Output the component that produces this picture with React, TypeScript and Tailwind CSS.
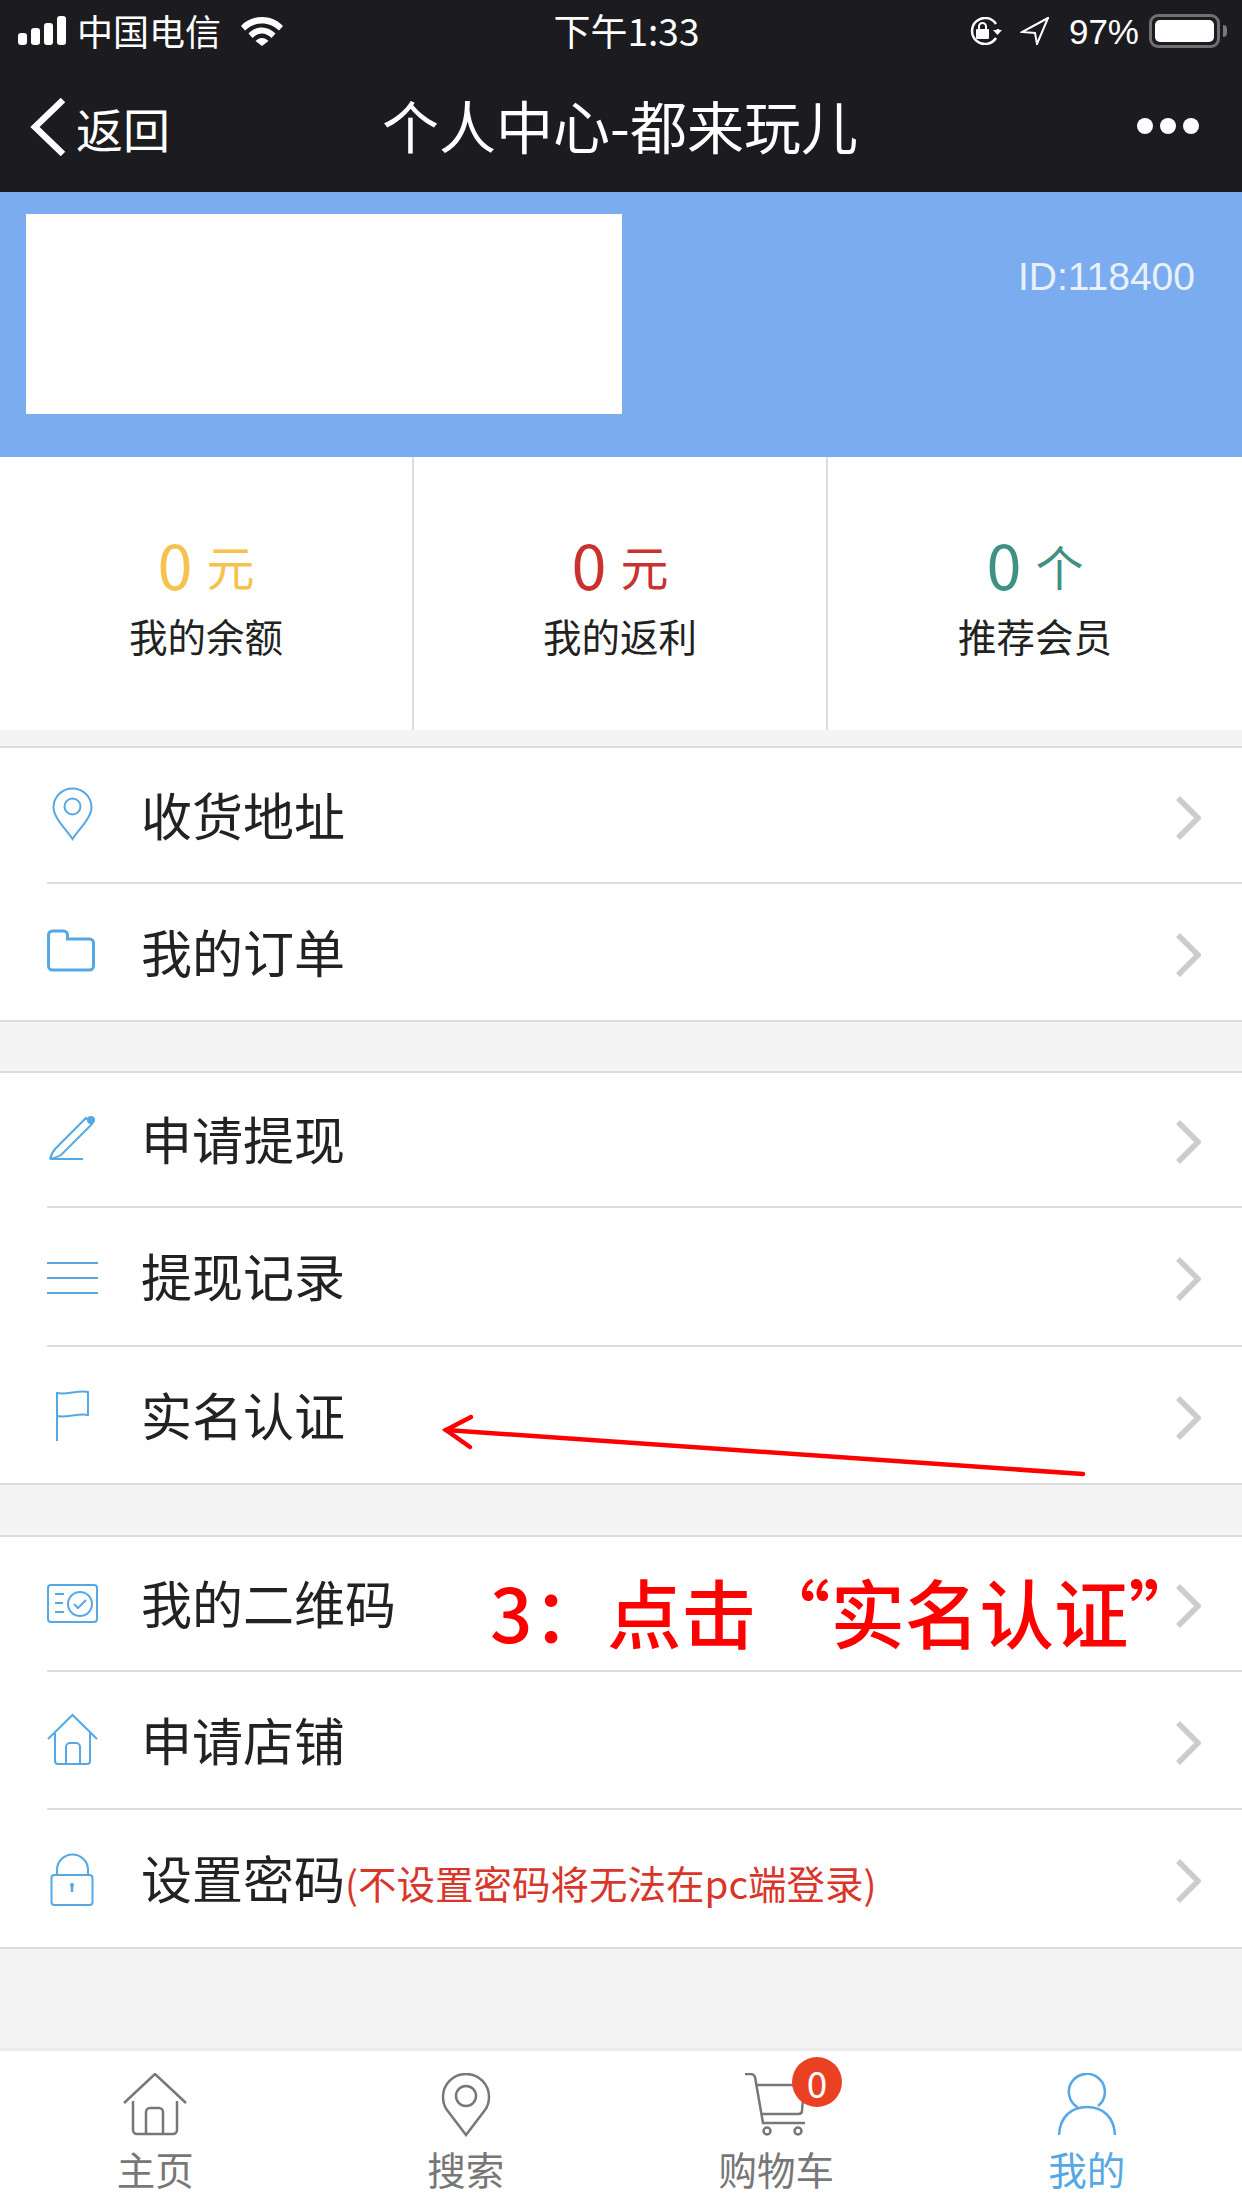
const sans = "font-['Noto_Sans_CJK_SC','Liberation_Sans',sans-serif]";

const PinIcon = () => (
  <svg width="52" height="60" viewBox="0 0 52 60" fill="none" stroke="#56a8e5" strokeWidth="2">
    <path d="M25.500 54C20 45 6.500 33 6.500 22.500a19 19 0 0 1 38 0C44.500 33 31 45 25.500 54Z" />
    <circle cx="25.500" cy="21.500" r="8" />
  </svg>
);

const FolderIcon = () => (
  <svg width="52" height="60" viewBox="0 0 52 60" fill="none" stroke="#56a8e5" strokeWidth="3">
    <path d="M1.500 13a4 4 0 0 1 4-4h11a4 4 0 0 1 4 4v4h22a4 4 0 0 1 4 4v23a4 4 0 0 1-4 4h-37a4 4 0 0 1-4-4Z" />
  </svg>
);

const PencilIcon = () => (
  <svg width="52" height="60" viewBox="0 0 52 60" fill="none" stroke="#56a8e5" strokeWidth="2">
    <path d="M3 49c1-4 3-8 6-11L39 8l6 6-31 31c-3 2-7 3-11 4h33" />
    <circle cx="44" cy="10" r="4" fill="#56a8e5" stroke="none" />
  </svg>
);

const LinesIcon = () => (
  <svg width="52" height="60" viewBox="0 0 52 60" fill="none" stroke="#56a8e5" strokeWidth="2">
    <path d="M0 16h51M0 31h51M0 46h51" />
  </svg>
);

const FlagIcon = () => (
  <svg width="52" height="60" viewBox="0 0 52 60" fill="none" stroke="#56a8e5" strokeWidth="2">
    <path d="M10 56V8c10 2 21-3 31-1v23c-10-2-21 3-31 1" />
  </svg>
);

const CardIcon = () => (
  <svg width="52" height="60" viewBox="0 0 52 60" fill="none" stroke="#56a8e5" strokeWidth="2">
    <rect x="1" y="11" width="49" height="37" rx="3" />
    <circle cx="33" cy="30" r="12" />
    <path d="M27 30l4 4 8-8M8 20h9M8 29h8M8 38h9" />
  </svg>
);

const HouseIcon = () => (
  <svg width="52" height="60" viewBox="0 0 52 60" fill="none" stroke="#56a8e5" strokeWidth="2">
    <path d="M1 29 25.500 5 50 29M8 23v28a3 3 0 0 0 3 3h29a3 3 0 0 0 3-3V23M19 54V37a4 4 0 0 1 4-4h6a4 4 0 0 1 4 4v17" />
  </svg>
);

const LockIcon = () => (
  <svg width="52" height="60" viewBox="0 0 52 60" fill="none" stroke="#56a8e5" strokeWidth="2">
    <rect x="4.500" y="26" width="41" height="30" rx="3" />
    <path d="M10 26V21a15.500 15.500 0 0 1 31 0v5" />
    <path d="M25 36v7" strokeWidth="2.500" />
    <circle cx="25" cy="36" r="2" fill="#56a8e5" stroke="none" />
  </svg>
);

const Chevron = () => (
  <svg className="mt-[5px]" width="28" height="46" viewBox="0 0 28 46" fill="none" stroke="#cccccc" strokeWidth="5.500">
    <path d="M5 3l20 20L5 43" />
  </svg>
);

const groups = [
  {
    className: "mt-0",
    rows: [
      { label: "收货地址", icon: <PinIcon />, height: "h-[136px]" },
      { label: "我的订单", icon: <FolderIcon />, height: "h-[136px]" },
    ],
  },
  {
    className: "mt-[49px]",
    rows: [
      { label: "申请提现", icon: <PencilIcon />, height: "h-[135px]" },
      { label: "提现记录", icon: <LinesIcon />, height: "h-[139px]" },
      { label: "实名认证", icon: <FlagIcon />, height: "h-[136px]" },
    ],
  },
  {
    className: "mt-[50px]",
    rows: [
      { label: "我的二维码", icon: <CardIcon />, height: "h-[135px]" },
      { label: "申请店铺", icon: <HouseIcon />, height: "h-[138px]" },
      {
        label: "设置密码",
        icon: <LockIcon />,
        height: "h-[137px]",
        note: "(不设置密码将无法在pc端登录)",
      },
    ],
  },
];

const stats = [
  { value: "0", unit: "元", label: "我的余额", color: "text-[#f5c24f]", border: "border-r-2" },
  { value: "0", unit: "元", label: "我的返利", color: "text-[#c9322e]", border: "border-r-2" },
  { value: "0", unit: "个", label: "推荐会员", color: "text-[#3f9184]", border: "" },
];

const StatusBar = () => (
  <div className="grid h-[62px] grid-cols-[1fr_auto_1fr] items-center pl-[18px] pr-[15px] text-white">
    <div className="flex items-center">
      <svg width="48" height="30" viewBox="0 0 48 30" fill="white">
        <rect x="0" y="17" width="9" height="12" rx="3" />
        <rect x="13" y="12" width="9" height="17" rx="3" />
        <rect x="26" y="7" width="9" height="22" rx="3" />
        <rect x="39" y="0" width="9" height="29" rx="3" />
      </svg>
      <span className="mb-[2px] ml-[11px] text-[36px] leading-none">中国电信</span>
      <svg className="ml-[20px]" width="42" height="29" viewBox="0 0 42 29" fill="white">
        <path d="M0 9C11-3 31-3 42 9l-4 4.500C28 4 14 4 4 13.500Z" />
        <path d="M7.500 16.500c8-8 19-8 27 0l-4 4.500c-6-6-13-6-19 0Z" />
        <path d="M14.500 24c4-4 9-4 13 0L21 29Z" />
      </svg>
    </div>
    <div className="mb-[2px] ml-[8px] text-[37px] leading-none">下午1:33</div>
    <div className="flex items-center justify-end">
      <svg width="35" height="28" viewBox="0 0 35 28" fill="none" stroke="white" strokeWidth="2.500">
        <path d="M29 21a13 13 0 1 1 0-14M31 12v3" />
        <path d="M26 13h9l-4.500 5Z" fill="white" stroke="none" />
        <rect x="9" y="12" width="13" height="10" rx="1" fill="white" stroke="none" />
        <path d="M12 12V9.500a3.500 3.500 0 0 1 7 0V12" strokeWidth="2" />
      </svg>
      <svg className="ml-[18px]" width="29" height="28" viewBox="0 0 29 28" fill="none" stroke="white" strokeWidth="2">
        <path d="M28 1 2 15l13 1 2 11Z" />
      </svg>
      <span className="ml-[20px] font-['Liberation_Sans',sans-serif] text-[35px] leading-none">97%</span>
      <div className="ml-[10px] flex items-center">
        <div className="h-[34px] w-[71px] rounded-[9px] border-[3px] border-[#6f6f74] p-[3px]">
          <div className="h-full w-full rounded-[5px] bg-white" />
        </div>
        <div className="ml-[3px] h-[12px] w-[4px] rounded-r-full bg-[#77777c]" />
      </div>
    </div>
  </div>
);

const NavBar = () => (
  <div className="grid h-[130px] grid-cols-[1fr_auto_1fr] items-center pl-[30px] pr-[43px] text-white">
    <div className="flex items-center">
      <svg width="36" height="60" viewBox="0 0 36 60" fill="none" stroke="white" strokeWidth="6.500">
        <path d="M33 3 5 30l28 27" />
      </svg>
      <span className="ml-[10px] text-[47px] leading-none">返回</span>
    </div>
    <div className="mb-[6px] ml-[11px] text-[57px] leading-none">个人中心-都来玩儿</div>
    <div className="mb-[2px] flex justify-end gap-[7px]">
      <div className="h-[16px] w-[16px] rounded-full bg-white" />
      <div className="h-[16px] w-[16px] rounded-full bg-white" />
      <div className="h-[16px] w-[16px] rounded-full bg-white" />
    </div>
  </div>
);

const Profile = () => (
  <div className="flex h-[265px] items-start justify-between bg-[#7bacef] pl-[26px] pr-[47px] pt-[22px]">
    <div className="h-[200px] w-[596px] bg-white" />
    <div className="mt-[41px] font-['Liberation_Sans',sans-serif] text-[39px] leading-[44px] text-[#e9f1fd]">
      ID:118400
    </div>
  </div>
);

const Stats = () => (
  <div className="grid h-[273px] grid-cols-3 bg-white">
    {stats.map((item) => (
      <div
        key={item.label}
        className={`flex flex-col items-center border-[#dddddd] pt-[76px] ${item.border}`}
      >
        <div className={`flex h-[60px] items-end gap-[14px] ${item.color}`}>
          <span className="text-[63px] leading-[60px]">{item.value}</span>
          <span className="text-[48px] leading-[56px]">{item.unit}</span>
        </div>
        <div className="mt-[18px] text-[38.500px] leading-[48px] text-[#222222]">{item.label}</div>
      </div>
    ))}
  </div>
);

const TabBar = () => (
  <div className="grid h-[160px] grid-cols-4 border-t-[3px] border-[#ebebeb] bg-white">
    <div className="flex flex-col items-center pt-[22px] text-[#777777]">
      <svg width="64" height="64" viewBox="0 0 64 64" fill="none" stroke="currentColor" strokeWidth="2.500">
        <path d="M1 30 32 1l31 29M10 28v29a4 4 0 0 0 4 4h36a4 4 0 0 0 4-4V28M23 61V39a4 4 0 0 1 4-4h9a4 4 0 0 1 4 4v22" />
      </svg>
      <span className="mt-[9px] text-[38.500px] leading-[44px]">主页</span>
    </div>
    <div className="flex flex-col items-center pt-[22px] text-[#777777]">
      <svg width="50" height="64" viewBox="0 0 50 64" fill="none" stroke="currentColor" strokeWidth="2.500">
        <path d="M25 62 6 37C3 33 2 29 2 24a23 23 0 0 1 46 0c0 5-1 9-4 13Z" />
        <circle cx="25" cy="23" r="10" />
      </svg>
      <span className="mt-[9px] text-[38.500px] leading-[44px]">搜索</span>
    </div>
    <div className="relative flex flex-col items-center pt-[22px] text-[#777777]">
      <svg width="64" height="64" viewBox="0 0 64 64" fill="none" stroke="currentColor" strokeWidth="2.500">
        <path d="M1 1h6c2 0 3 1 4 3l8 46h42M12 12h48l-2 26c0 2-2 3-4 3H18" />
        <circle cx="23" cy="58" r="3.500" />
        <circle cx="54" cy="58" r="3.500" />
      </svg>
      <div className="absolute left-[171px] top-[6px] flex h-[50px] w-[50px] items-center justify-center rounded-full bg-[#ea4125] text-[37px] leading-none text-white">
        0
      </div>
      <span className="mt-[9px] text-[38.500px] leading-[44px]">购物车</span>
    </div>
    <div className="flex flex-col items-center pt-[22px] text-[#56a8e5]">
      <svg width="60" height="64" viewBox="0 0 60 64" fill="none" stroke="currentColor" strokeWidth="2.500">
        <path d="M41 33A18 18 0 1 0 21 34.500" />
        <path d="M2 62C3 44 14 34 30 34c16 0 27 10 28 28" />
      </svg>
      <span className="mt-[9px] text-[38.500px] leading-[44px]">我的</span>
    </div>
  </div>
);

export default function App() {
  return (
    <div className={`relative flex h-[2208px] w-[1242px] flex-col overflow-hidden bg-[#f4f4f4] ${sans}`}>
      <div className="bg-[#1b1b20]">
        <StatusBar />
        <NavBar />
      </div>
      <Profile />
      <Stats />
      <div className="mt-[16px] flex flex-1 flex-col">
        {groups.map((group, index) => (
          <div key={index} className={`border-y-2 border-[#dddddd] bg-white ${group.className}`}>
            {group.rows.map((row, i) => (
              <div
                key={row.label}
                className={`ml-[47px] flex items-center pr-[41px] ${row.height} ${
                  i < group.rows.length - 1 ? "border-b-2 border-[#dddddd]" : ""
                }`}
              >
                <div className="w-[94px] shrink-0">{row.icon}</div>
                <div className="flex flex-1 items-center">
                  <span className="mb-[2px] text-[51px] leading-none text-[#222222]">{row.label}</span>
                  {row.note && (
                    <span className="mt-[8px] text-[38.500px] leading-none text-[#d9362b]">{row.note}</span>
                  )}
                </div>
                <Chevron />
              </div>
            ))}
          </div>
        ))}
      </div>
      <TabBar />

      {/* annotations drawn on top of the screenshot */}
      <svg className="absolute left-[440px] top-[1410px]" width="650" height="70" viewBox="0 0 650 70" fill="none" stroke="#ff0000" strokeWidth="4.500" strokeLinecap="round">
        <path d="M6 20l637 44" />
        <path d="M31 7 6 20l24 17" />
      </svg>
      <div className="absolute left-[490px] top-[1566px] whitespace-nowrap text-[74.500px] font-medium leading-[90px] text-[#ff0000]">
        3：点击“实名认证”
      </div>
    </div>
  );
}
